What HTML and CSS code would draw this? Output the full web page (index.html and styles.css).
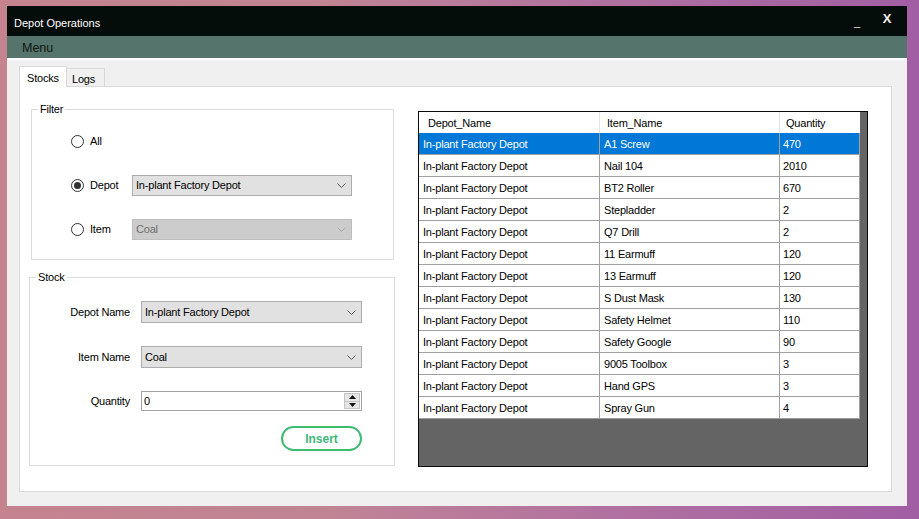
FILE: index.html
```html
<!DOCTYPE html>
<html>
<head>
<meta charset="utf-8">
<link rel="stylesheet" href="styles.css">
</head>
<body>
<div class="window">
  <div class="titlebar">
    <span class="title">Depot Operations</span>
    <span class="tb-btn tb-min">_</span>
    <span class="tb-btn tb-close">X</span>
  </div>
  <div class="menubar"><span class="menu-item">Menu</span></div>
  <div class="client">
    <div class="tabs">
      <div class="tab tab-active">Stocks</div>
      <div class="tab">Logs</div>
    </div>
    <div class="tabpage">
      <div class="left">
        <div class="group group-filter">
          <span class="legend">Filter</span>
          <div class="frow">
            <span class="radio"></span><span class="rlabel">All</span>
          </div>
          <div class="frow">
            <span class="radio radio-on"></span><span class="rlabel">Depot</span>
            <div class="combo combo-filter"><span>In-plant Factory Depot</span><svg class="chev" width="9" height="5" viewBox="0 0 9 5"><path d="M0.5 0.5 L4.5 4.5 L8.5 0.5" fill="none" stroke="#5a5a5a" stroke-width="1"/></svg></div>
          </div>
          <div class="frow">
            <span class="radio"></span><span class="rlabel">Item</span>
            <div class="combo combo-filter combo-disabled"><span>Coal</span><svg class="chev" width="9" height="5" viewBox="0 0 9 5"><path d="M0.5 0.5 L4.5 4.5 L8.5 0.5" fill="none" stroke="#a8a8a8" stroke-width="1"/></svg></div>
          </div>
        </div>
        <div class="group group-stock">
          <span class="legend">Stock</span>
          <div class="srow">
            <span class="slabel">Depot Name</span>
            <div class="combo combo-stock"><span>In-plant Factory Depot</span><svg class="chev" width="9" height="5" viewBox="0 0 9 5"><path d="M0.5 0.5 L4.5 4.5 L8.5 0.5" fill="none" stroke="#5a5a5a" stroke-width="1"/></svg></div>
          </div>
          <div class="srow srow-item">
            <span class="slabel">Item Name</span>
            <div class="combo combo-stock"><span>Coal</span><svg class="chev" width="9" height="5" viewBox="0 0 9 5"><path d="M0.5 0.5 L4.5 4.5 L8.5 0.5" fill="none" stroke="#5a5a5a" stroke-width="1"/></svg></div>
          </div>
          <div class="srow srow-qty">
            <span class="slabel">Quantity</span>
            <div class="numeric">
              <span class="num-val">0</span>
              <div class="spin">
                <span class="spin-btn"><svg width="7" height="4" viewBox="0 0 7 4"><path d="M0 4 L3.5 0 L7 4 Z" fill="#111"/></svg></span>
                <span class="spin-btn"><svg width="7" height="4" viewBox="0 0 7 4"><path d="M0 0 L3.5 4 L7 0 Z" fill="#111"/></svg></span>
              </div>
            </div>
          </div>
          <div class="btnrow"><div class="insert">Insert</div></div>
        </div>
      </div>
      <div class="grid">
        <div class="gtable">
          <div class="ghead">
            <div class="hc c1">Depot_Name</div>
            <div class="hc c2">Item_Name</div>
            <div class="hc c3">Quantity</div>
          </div>
          <div class="grow sel"><div class="gc c1">In-plant Factory Depot</div><div class="gc c2">A1 Screw</div><div class="gc c3">470</div></div>
          <div class="grow"><div class="gc c1">In-plant Factory Depot</div><div class="gc c2">Nail 104</div><div class="gc c3">2010</div></div>
          <div class="grow"><div class="gc c1">In-plant Factory Depot</div><div class="gc c2">BT2 Roller</div><div class="gc c3">670</div></div>
          <div class="grow"><div class="gc c1">In-plant Factory Depot</div><div class="gc c2">Stepladder</div><div class="gc c3">2</div></div>
          <div class="grow"><div class="gc c1">In-plant Factory Depot</div><div class="gc c2">Q7 Drill</div><div class="gc c3">2</div></div>
          <div class="grow"><div class="gc c1">In-plant Factory Depot</div><div class="gc c2">11 Earmuff</div><div class="gc c3">120</div></div>
          <div class="grow"><div class="gc c1">In-plant Factory Depot</div><div class="gc c2">13 Earmuff</div><div class="gc c3">120</div></div>
          <div class="grow"><div class="gc c1">In-plant Factory Depot</div><div class="gc c2">S Dust Mask</div><div class="gc c3">130</div></div>
          <div class="grow"><div class="gc c1">In-plant Factory Depot</div><div class="gc c2">Safety Helmet</div><div class="gc c3">110</div></div>
          <div class="grow"><div class="gc c1">In-plant Factory Depot</div><div class="gc c2">Safety Google</div><div class="gc c3">90</div></div>
          <div class="grow"><div class="gc c1">In-plant Factory Depot</div><div class="gc c2">9005 Toolbox</div><div class="gc c3">3</div></div>
          <div class="grow"><div class="gc c1">In-plant Factory Depot</div><div class="gc c2">Hand GPS</div><div class="gc c3">3</div></div>
          <div class="grow"><div class="gc c1">In-plant Factory Depot</div><div class="gc c2">Spray Gun</div><div class="gc c3">4</div></div>
        </div>
      </div>
    </div>
  </div>
</div>
</body>
</html>
```
FILE: styles.css
```css
* { box-sizing: border-box; }
html, body { margin: 0; padding: 0; }
body {
  width: 919px;
  height: 519px;
  overflow: hidden;
  background: linear-gradient(90deg, #c4838f 0%, #c08494 35%, #b272a0 65%, #a15ea3 100%);
  font-family: "Liberation Sans", Arial, sans-serif;
  font-size: 11px;
  letter-spacing: -0.2px;
  color: #000;
  padding: 6px 0 0 7px;
}
.window {
  width: 900px;
  height: 500px;
  background: #f0f0f0;
  display: flex;
  flex-direction: column;
}
.titlebar {
  height: 30px;
  background: #050d0b;
  display: flex;
  align-items: center;
  padding: 3px 5px 0 7px;
  color: #fff;
}
.title { font-size: 11px; flex: 1; letter-spacing: 0; }
.tb-btn { width: 30px; text-align: center; letter-spacing: 0; }
.tb-min { font-size: 11px; color: #e8eef5; margin-top: -1px; }
.tb-close { font-size: 13px; font-weight: bold; color: #f4efe6; margin-top: -8px; }
.menubar {
  height: 22px;
  background: #54746c;
  display: flex;
  align-items: center;
  padding-left: 15px;
}
.menu-item { font-size: 12.5px; color: #101512; letter-spacing: 0; padding-top: 1px; }
.client {
  flex: 1;
  border-top: 2px solid #ffffff;
  padding: 6px 15px 14px 12px;
  display: flex;
  flex-direction: column;
}
.tabs { display: flex; align-items: flex-end; height: 20px; }
.tab {
  height: 18px;
  width: 38px;
  padding: 1px 0 0 5px;
  border: 1px solid #d9d9d9;
  border-bottom: none;
  border-left: none;
  background: #f0f0f0;
  font-size: 11px;
  line-height: 18px;
}
.tab-active {
  height: 21px;
  width: 48px;
  background: #fff;
  border-left: 1px solid #d9d9d9;
  padding: 2px 0 0 7px;
  margin-bottom: -1px;
  position: relative;
  z-index: 1;
}
.tabpage {
  flex: 1;
  background: #fff;
  border: 1px solid #d9d9d9;
  display: flex;
}
.left {
  width: 380px;
  display: flex;
  flex-direction: column;
  padding-top: 22px;
}
.group {
  position: relative;
  border: 1px solid #dcdcdc;
}
.legend {
  position: absolute;
  top: -8px;
  left: 6px;
  padding: 0 2px;
  background: #fff;
  line-height: 14px;
  font-size: 11px;
}
.group-filter {
  margin-left: 11px;
  width: 363px;
  height: 151px;
  padding: 21px 0 0 39px;
  display: flex;
  flex-direction: column;
  gap: 24px;
}
.frow { display: flex; align-items: center; height: 20px; }
.radio {
  width: 13px;
  height: 13px;
  border: 1px solid #333;
  border-radius: 50%;
  background: #fff;
  display: flex;
  align-items: center;
  justify-content: center;
  flex: none;
}
.radio-on::after {
  content: "";
  width: 7px;
  height: 7px;
  border-radius: 50%;
  background: #333;
}
.rlabel { width: 48px; padding-left: 6px; }
.combo {
  display: flex;
  align-items: center;
  background: #e1e1e1;
  border: 1px solid #adadad;
  padding: 0 5px 0 3px;
}
.combo span { flex: 1; }
.chev { flex: none; }
.combo-filter { width: 220px; height: 21px; }
.combo-disabled { background: #cccccc; border-color: #bfbfbf; color: #6d6d6d; }
.group-stock {
  margin-top: 17px;
  margin-left: 9px;
  width: 366px;
  height: 189px;
  padding-top: 23px;
  display: flex;
  flex-direction: column;
}
.srow { display: flex; align-items: center; }
.srow-item { margin-top: 23px; }
.srow-qty { margin-top: 23px; }
.slabel { width: 101px; text-align: right; padding-right: 1px; margin-right: 10px; }
.combo-stock { width: 221px; height: 22px; }
.numeric {
  width: 221px;
  height: 20px;
  border: 1px solid #a3a3a3;
  background: #fff;
  display: flex;
  align-items: center;
  padding: 0 1px 0 2px;
}
.num-val { flex: 1; }
.spin { width: 16px; height: 16px; display: flex; flex-direction: column; }
.spin-btn {
  flex: 1;
  background: #e6e6e6;
  border: 1px solid #c4c4c4;
  display: flex;
  align-items: center;
  justify-content: center;
}
.spin-btn + .spin-btn { border-top: none; }
.btnrow { display: flex; justify-content: flex-end; margin-top: 15px; padding-right: 32px; }
.insert {
  width: 81px;
  height: 25px;
  border: 2px solid #3dbb71;
  border-radius: 13px;
  color: #3cb87a;
  font-weight: bold;
  font-size: 12px;
  letter-spacing: 0;
  display: flex;
  align-items: center;
  justify-content: center;
}
.grid {
  margin: 24px 0 0 18px;
  width: 450px;
  height: 356px;
  border: 1px solid #0a0a0a;
  background: #646464;
}
.gtable { width: 441px; background: #fff; }
.ghead { display: flex; height: 21px; background: #fff; }
.hc { display: flex; align-items: center; border-right: 1px solid #e2e2e2; }
.ghead .c1 { padding-left: 9px; }
.ghead .c2 { padding-left: 7px; }
.ghead .c3 { padding-left: 6px; border-right-color: #fff; }
.c1 { width: 181px; }
.c2 { width: 180px; }
.c3 { width: 80px; }
.grow { display: flex; height: 22px; }
.gc {
  display: flex;
  align-items: center;
  padding-left: 4px;
  border-right: 1px solid #a0a0a0;
  border-bottom: 1px solid #a0a0a0;
  padding-top: 1px;
}
.gc.c2 { padding-left: 4px; }
.gc.c3 { padding-left: 3px; }
.sel .gc { background: #0078d7; color: #fff; }
```
